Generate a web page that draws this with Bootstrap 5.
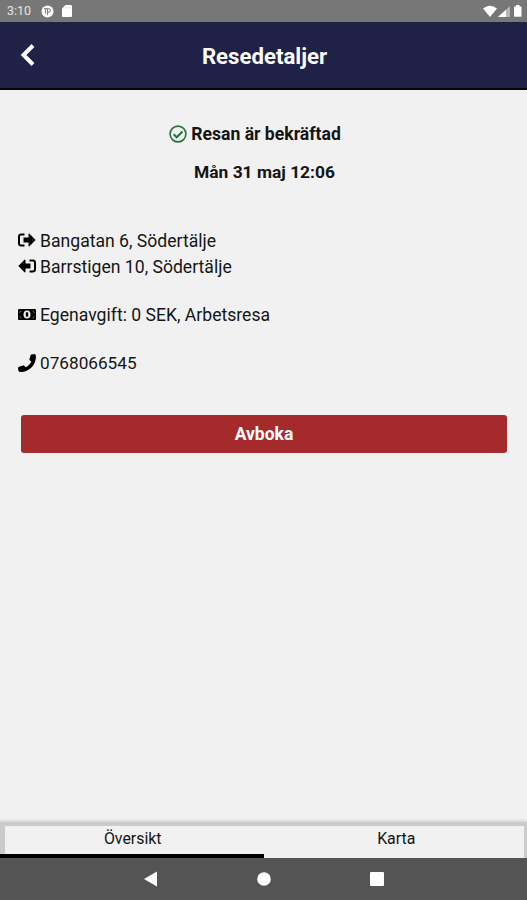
<!DOCTYPE html>
<html lang="sv">
<head>
<meta charset="utf-8">
<meta name="viewport" content="width=device-width, initial-scale=1">
<title>Resedetaljer</title>
<link href="https://cdn.jsdelivr.net/npm/bootstrap@5.3.0/dist/css/bootstrap.min.css" rel="stylesheet">
<style>
body{font-family:Roboto,"Liberation Sans",sans-serif;background:#f1f1f1;color:#151515;height:900px;overflow:hidden}
svg{display:block;flex:none}
.statusbar{height:22px;background:#777;color:#e4e4e4;font-size:12.5px;padding:0 5px 0 7px}
.clock{width:34px;line-height:22px}
.appbar{height:68px;background:#1f2147;border-bottom:2px solid #050510;padding-left:20px;padding-right:18px}
.side{width:16px}
.title{font-size:22.2px;line-height:26px;padding-top:2px;font-weight:700;color:#fff}
.status-line{font-size:17.6px;line-height:20px;font-weight:700}
.confirm{padding-top:34px;padding-right:17px;gap:4px}
.date{margin-top:18px;padding-left:2px;font-size:17.4px}
.details{margin:46px 18px 0;font-size:17.6px;line-height:26px}
.detail{height:26px;gap:4px}
.phone{font-size:17.2px}
.space{margin-top:22px}
.cancel{margin:39px 20px 0 21px;height:38px;padding:1px 0 0;background:#a52a2c;color:#fff;border:0;border-radius:3px;font-size:17.5px;font-weight:700}
.cancel:hover{background:#8f2225;color:#fff}
.tabs{height:36px;background:#f1f1f1;border:solid #cbcbcb;border-width:4px 3px 0 5px;box-shadow:0 -1px 3px #ccc;font-size:15.9px}
.tab{height:32px;padding-top:3px;line-height:20px;color:#151515;text-decoration:none}
.tab-overview{padding-right:4px}
.tab-map{padding-left:4px}
.marker{height:4px;margin-top:-4px;width:264px;background:#000;position:relative}
.sysnav{height:42px;background:#545454}
.sysnav .back{margin-left:143px}
.sysnav .home{margin-left:99px}
.sysnav .recent{margin-left:99px}
</style>
<script src="https://cdn.jsdelivr.net/npm/bootstrap@5.3.0/dist/js/bootstrap.bundle.min.js"></script>
</head>
<body class="d-flex flex-column m-0">
<div class="statusbar d-flex align-items-center">
  <span class="clock">3:10</span>
  <svg width="13" height="13" viewBox="0 0 13 13"><circle cx="6.5" cy="6.5" r="6" fill="#fff"/><path d="M3 3.700h4.800a1.700 1.700 0 0 1 0 3.400H7M4.600 4v4.500M6.600 4v6" fill="none" stroke="#777" stroke-width="1"/></svg>
  <svg class="ms-2" width="10" height="12" viewBox="0 0 10 12"><path d="M3.5 0H9q1 0 1 1v10q0 1-1 1H1q-1 0-1-1V3.5z" fill="#fff"/><path d="M3.7 1.5v2M5.7 1.5v2M7.7 1.5v2" stroke="#ccc" stroke-width=".7"/></svg>
  <svg class="ms-auto" width="40" height="14" viewBox="0 0 40 14"><path d="M1 4.500Q8 -1 15 4.500L8 13z" fill="#fff"/><path d="M16 13L28 2v11z" fill="#b5b5b5"/><path d="M16 13L24 5.700V13z" fill="#fff"/><path d="M32.500 2.500h1.500V1h3.500v1.500H39q.5 0 .5.5v9q0 .8-.8.8h-5.900q-.8 0-.8-.8V3z" fill="#fff"/></svg>
</div>
<header class="appbar d-flex align-items-center justify-content-between">
  <a class="side" href="#" aria-label="Tillbaka"><svg width="16" height="24" viewBox="0 0 16 24"><path d="M13 2.500L3.500 12l9.500 9.500" fill="none" stroke="#fff" stroke-width="4"/></svg></a>
  <h1 class="title m-0">Resedetaljer</h1>
  <span class="side"></span>
</header>
<main class="flex-grow-1 d-flex flex-column">
  <div class="confirm status-line d-flex justify-content-center align-items-center">
    <svg width="18" height="18" viewBox="0 0 18 18" fill="none" stroke="#24733d"><circle cx="9" cy="9" r="7.900" stroke-width="1.600"/><path d="M4.700 9.300l3 3L13.500 6.500" stroke-width="2"/></svg>
    <span>Resan är bekräftad</span>
  </div>
  <div class="date status-line text-center">Mån 31 maj 12:06</div>
  <div class="details">
    <div class="detail d-flex align-items-center"><svg width="18" height="18" viewBox="0 0 18 18"><path d="M6.500 2.500H3.300Q1 2.500 1 4.800v6.400q0 2.300 2.300 2.300h3.200" fill="none" stroke="#000" stroke-width="2"/><path d="M5.500 5.500h5V2.200q.2-1 1-.4L17.700 8l-6.200 6.200q-.8.600-1-.4v-3.300h-5z"/></svg><span>Bangatan 6, Södertälje</span></div>
    <div class="detail d-flex align-items-center"><svg width="18" height="18" viewBox="0 0 18 18"><path d="M11.500 2.500h3.200q2.300 0 2.300 2.300v6.400q0 2.300-2.300 2.300h-3.200" fill="none" stroke="#000" stroke-width="2"/><path d="M12.500 5.500h-5V2.200q-.2-1-1-.4L.3 8l6.200 6.200q.8.600 1-.4v-3.300h5z"/></svg><span>Barrstigen 10, Södertälje</span></div>
    <div class="detail space d-flex align-items-center"><svg width="18" height="12" viewBox="0 0 18 12"><rect width="18" height="11" rx="1"/><ellipse cx="9" cy="5.500" rx="3.500" ry="4" fill="#f1f1f1"/><path d="M1.500 3.500Q3 3.500 3 1.500M1.500 7.500Q3 7.500 3 9.500M16.500 3.500Q15 3.500 15 1.500M16.500 7.500Q15 7.500 15 9.500" stroke="#999" stroke-width=".7" fill="none"/><path d="M9 3.300v4.400" stroke="#000" stroke-width="2.400"/></svg><span>Egenavgift: 0 SEK, Arbetsresa</span></div>
    <div class="detail phone space d-flex align-items-center"><svg width="18" height="18" viewBox="0 0 18 18"><path d="M13.400 0.500L16.700 0Q18 .2 18 2.500C18 11 11 18 3 18Q.7 18 .4 16.800L0 13.900Q.1 13 1 12.700L5 11.400Q6 11.200 6.500 12L7.600 13.300C10.300 12.100 12.300 10.100 13.300 7.600L12 6.500Q11.200 5.900 11.500 5L12.500 1.400Q12.700.6 13.400.5z"/></svg><span>0768066545</span></div>
  </div>
  <button type="button" class="cancel btn">Avboka</button>
</main>
<nav class="tabs d-flex text-center">
  <a class="tab tab-overview w-50" href="#" aria-current="page">Översikt</a>
  <a class="tab tab-map w-50" href="#">Karta</a>
</nav>
<div class="marker"></div>
<div class="sysnav d-flex align-items-center">
  <svg class="back" width="15" height="16" viewBox="0 0 15 16"><path d="M1 8L14 .5v15z" fill="#fff"/></svg>
  <svg class="home" width="14" height="14" viewBox="0 0 14 14"><circle cx="7" cy="7" r="6.800" fill="#fff"/></svg>
  <svg class="recent" width="14" height="14"><rect width="14" height="14" rx="1" fill="#fff"/></svg>
</div>
</body>
</html>
